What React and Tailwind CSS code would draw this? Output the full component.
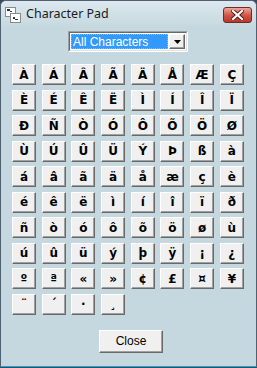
import React from 'react';

const rows = [
  ['À', 'Á', 'Â', 'Ã', 'Ä', 'Å', 'Æ', 'Ç'],
  ['È', 'É', 'Ê', 'Ë', 'Ì', 'Í', 'Î', 'Ï'],
  ['Ð', 'Ñ', 'Ò', 'Ó', 'Ô', 'Õ', 'Ö', 'Ø'],
  ['Ù', 'Ú', 'Û', 'Ü', 'Ý', 'Þ', 'ß', 'à'],
  ['á', 'â', 'ã', 'ä', 'å', 'æ', 'ç', 'è'],
  ['é', 'ê', 'ë', 'ì', 'í', 'î', 'ï', 'ð'],
  ['ñ', 'ò', 'ó', 'ô', 'õ', 'ö', 'ø', 'ù'],
  ['ú', 'û', 'ü', 'ý', 'þ', 'ÿ', '¡', '¿'],
  ['º', 'ª', '«', '»', '¢', '£', '¤', '¥'],
  ['¨', '´', '·', '¸'],
];

const chars = rows.flat();

// classic raised 3D button look
const raised =
  'bg-[#f0f0f0] border border-t-white border-l-white border-r-[#696969] border-b-[#696969] shadow-[inset_-1px_-1px_0_#a0a0a0]';

function AppIcon() {
  return (
    <svg width="16" height="16" viewBox="0 0 16 16">
      <rect x="0.5" y="0.5" width="10" height="9" fill="#fff" stroke="#8a8a8a" />
      <rect x="5.5" y="6.5" width="10" height="9" fill="#fff" stroke="#8a8a8a" />
      <rect x="2" y="2" width="3" height="2" fill="#333" />
      <rect x="5" y="4" width="2" height="1" fill="#333" />
      <rect x="8" y="10" width="2" height="2" fill="#333" />
      <rect x="10" y="12" width="3" height="1" fill="#333" />
    </svg>
  );
}

function CloseX() {
  return (
    <svg width="13" height="10" viewBox="0 0 13 10">
      <path d="M2 1 L11 9 M11 1 L2 9" stroke="#5a1a14" strokeWidth="4" strokeLinecap="square" />
      <path d="M2 1 L11 9 M11 1 L2 9" stroke="#fff" strokeWidth="2.2" strokeLinecap="square" />
    </svg>
  );
}

export default function App() {
  return (
    <div className="w-[257px] h-[368px] bg-[#3a4a58]">
      <div className="w-[257px] h-[367px] flex flex-col border border-[#4f6170] border-b-[#1fa3d6] rounded-t-[6px] bg-[#c5d8df] overflow-hidden">
        {/* title bar */}
        <div className="h-[27px] shrink-0 flex items-center pl-[4px] pr-[4px] bg-gradient-to-b from-[#dde8ef] to-[#c5d8df]">
          <AppIcon />
          <span className="ml-[5px] text-[12.5px] text-[#1b1b1b] font-['Noto_Sans',sans-serif] leading-none">
            Character Pad
          </span>
          <div className="ml-auto w-[29px] h-[16px] rounded-[3px] border border-[#6e2a24] bg-gradient-to-b from-[#e9a99c] via-[#d0574a] to-[#b8382c] flex items-center justify-center">
            <CloseX />
          </div>
        </div>

        {/* dropdown */}
        <div className="mt-[3px] flex justify-center pr-[1px]">
          <div className="w-[120px] h-[21px] flex border border-t-[#a0a0a0] border-l-[#a0a0a0] border-r-white border-b-white bg-white">
            <div className="flex-1 flex border border-t-[#696969] border-l-[#696969] border-r-[#e3e3e3] border-b-[#e3e3e3] p-[1px]">
              <div className="flex-1 flex items-center bg-[#3399ff] outline outline-1 outline-dotted outline-[#ffb000] -outline-offset-1 pl-[2px]">
                <span className="text-white text-[12px] font-['Liberation_Sans',sans-serif] leading-none">All Characters</span>
              </div>
              <div className={`w-[16px] ml-[1px] flex items-center justify-center ${raised}`}>
                <svg width="7" height="4" viewBox="0 0 7 4">
                  <path d="M0 0 H7 L3.5 4 Z" fill="#000" />
                </svg>
              </div>
            </div>
          </div>
        </div>

        {/* character grid */}
        <div className="mt-[12px] pl-[11px] grid grid-cols-[repeat(8,24px)] auto-rows-[21px] gap-x-[5.7px] gap-y-[4.5px]">
          {chars.map((c, i) => (
            <div
              key={i}
              className={`${raised} flex items-center justify-center text-[12px] font-bold text-black font-['DejaVu_Sans',sans-serif] leading-none overflow-hidden`}
            >
              {c}
            </div>
          ))}
        </div>

        {/* close button */}
        <div className="mt-[15px] flex justify-center pl-[5px]">
          <div className={`w-[64px] h-[23px] flex items-center justify-center text-[12px] text-black font-['Liberation_Sans',sans-serif] ${raised}`}>
            Close
          </div>
        </div>
      </div>
    </div>
  );
}
